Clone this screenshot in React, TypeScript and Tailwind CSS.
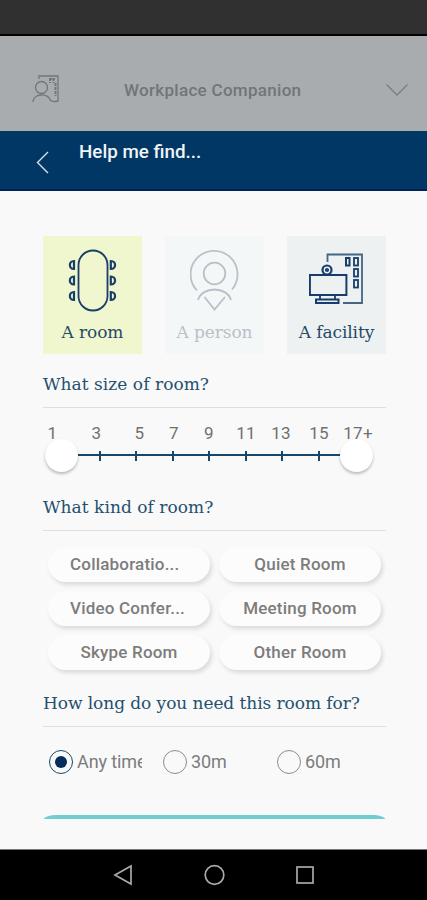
import clsx from "clsx";

const finders = [
  { id: "room", label: "A room", icon: RoomIcon, tile: "bg-[#f0f6ce] text-[#1f4a68]", width: "w-[62px]" },
  { id: "person", label: "A person", icon: PersonIcon, tile: "bg-[#f4f7f7] text-[#b9c0c9]", width: "w-[76px]" },
  { id: "facility", label: "A facility", icon: FacilityIcon, tile: "bg-[#edf1f1] text-[#1f4a68]", width: "w-[77px]" },
];

const sizes = [
  { label: "1", width: "w-[45px]" },
  { label: "3", width: "w-[43px]" },
  { label: "5", width: "w-[43px]" },
  { label: "7", width: "w-[26px]" },
  { label: "9", width: "w-[44px]" },
  { label: "11", width: "w-[30px]" },
  { label: "13", width: "w-[40px]" },
  { label: "15", width: "w-[36px]" },
  { label: "17+", width: "w-[42px]" },
];

const kinds = ["Collaboratio...", "Quiet Room", "Video Confer...", "Meeting Room", "Skype Room", "Other Room"];

const durations = ["Any time", "30m", "60m"];

function RoomIcon() {
  return (
    <svg width="50" height="64" viewBox="0 0 50 64" fill="none" stroke="#173f69" strokeWidth="1.8">
      <rect x="10.5" y="1.5" width="29" height="60" rx="14.5" />
      {[16, 31.5, 47].map((y) => (
        <g key={y} strokeWidth="2.2">
          <path d={`M6 ${y - 4}v8C0.5 ${y + 4} 0.5 ${y - 4} 6 ${y - 4}Z`} />
          <path d={`M42.8 ${y - 4}v8C48.5 ${y + 4} 48.5 ${y - 4} 42.8 ${y - 4}Z`} />
        </g>
      ))}
    </svg>
  );
}

function PersonIcon() {
  return (
    <svg width="50" height="64" viewBox="0 0 50 64" fill="none" stroke="currentColor" strokeWidth="1.8">
      <path d="M7 41.5A23.5 23.5 0 1 1 42 40.5" />
      <circle cx="24.5" cy="24.5" r="10.8" />
      <path d="M8 51C12 37 37 37 41 51" />
      <path d="M14.5 48 24.5 60.5 35 48" />
    </svg>
  );
}

function FacilityIcon() {
  return (
    <svg width="56" height="64" viewBox="0 0 56 64" fill="none" stroke="#183c6c" strokeWidth="1.8">
      <path d="M18.5 13V5.5H53V54H34" stroke="#456584" />
      <circle cx="18" cy="21" r="4.5" strokeWidth="2.2" />
      <circle cx="18" cy="21" r="1.2" />
      <rect x="0.9" y="26" width="36.5" height="20" strokeWidth="2" />
      <path d="M11 46v4.5M26 46v4.5" />
      <rect x="7" y="50.5" width="22.5" height="3.5" strokeWidth="2" />
      <rect x="37" y="9" width="3.5" height="7.5" strokeWidth="2" />
      <rect x="45" y="9" width="4" height="7.5" />
      <rect x="45" y="20" width="4" height="7.5" />
      <rect x="45" y="31" width="4" height="7.5" />
    </svg>
  );
}

function CompanionIcon() {
  return (
    <svg width="28" height="30" viewBox="0 0 28 30" fill="none" stroke="#70777a" strokeWidth="1.3">
      <circle cx="9.5" cy="12.5" r="6" />
      <path d="M1 27C1 18 17 18 18 25q2.5 2.5 8 1V1H7v3" />
      <path d="M18 3v5M21.5 3v5M17 4h6M23.5 8v13" strokeWidth="2" strokeDasharray="3 1" />
    </svg>
  );
}

function SectionTitle({ children, className }: { children: string; className?: string }) {
  return (
    <h2 className={clsx("h-[34px] shrink-0 border-b border-[#dcdfdf] whitespace-nowrap font-['DejaVu_Serif',serif] text-[17px] leading-[20px] text-[#24506f]", className)}>
      {children}
    </h2>
  );
}

function SizeSlider() {
  return (
    <div className="h-[89px] shrink-0 pt-[15px]">
      <div className="-ml-[13px] flex text-[17px] leading-5 tracking-[0.3px] text-[#707070]">
        {sizes.map((size) => (
          <span key={size.label} className={clsx("shrink-0 text-center", size.width)}>
            {size.label}
          </span>
        ))}
      </div>
      <div className="relative -mt-[4px] ml-[19px] flex h-8 w-[294px] items-center">
        <div className="h-[2px] w-full bg-[#17486a]" />
        <div className="absolute inset-0 flex items-center justify-between">
          {sizes.map((size) => (
            <i key={size.label} className="mt-0.5 h-[10px] w-[2px] bg-[#17486a]" />
          ))}
        </div>
        <div className="absolute top-0 -left-[17px] size-[33px] rounded-full bg-white shadow-[0_2px_3px_rgba(0,0,0,0.25)]" />
        <div className="absolute top-0 -right-[17px] size-[33px] rounded-full bg-white shadow-[0_2px_3px_rgba(0,0,0,0.25)]" />
      </div>
    </div>
  );
}

function Radio({ label, checked }: { label: string; checked: boolean }) {
  return (
    <div className="flex h-6 w-[93px] items-center gap-1 overflow-hidden">
      <span className={clsx("flex size-6 shrink-0 items-center justify-center rounded-full border", checked ? "border-[#17486a]" : "border-[#8d8d8d]")}>
        {checked && <span className="size-3 rounded-full bg-[#042d5c]" />}
      </span>
      <span className="text-[18px] leading-6 tracking-[-0.1px] whitespace-nowrap text-[#7c7c7c]">{label}</span>
    </div>
  );
}

export default function App() {
  return (
    <div className="flex h-[900px] w-[427px] flex-col overflow-hidden bg-[#f9f9f9] font-[Roboto,sans-serif]">
      <div className="h-[36px] shrink-0 border-b-2 border-black bg-[#303030]" />
      <header className="flex h-[95px] shrink-0 items-center bg-[#a8acae] pt-3">
        <div className="ml-[32px] w-[92px]">
          <CompanionIcon />
        </div>
        <span className="w-[262px] whitespace-nowrap text-[17px] leading-6 font-medium tracking-[0.3px] text-[#70757a]">Workplace Companion</span>
        <svg width="23" height="14" viewBox="0 0 23 14" fill="none" stroke="#787d80" strokeWidth="1.3">
          <path d="M0.5 1.5 11 12 21.5 1.5" />
        </svg>
      </header>
      <nav className="flex h-[60px] shrink-0 border-b-2 border-[#00205a] bg-[#003764]">
        <svg className="mt-5 ml-9" width="13" height="23" viewBox="0 0 13 23" fill="none" stroke="#d9e2e8" strokeWidth="1.4">
          <path d="M12 1 1.5 11.5 12 22" />
        </svg>
        <h1 className="mt-[9px] ml-[30px] text-[18.8px] leading-6 font-medium text-[#f0f4f7]">Help me find...</h1>
      </nav>

      <main className="flex w-[386px] grow flex-col pt-[45px] pl-[43px]">
        <div className="flex h-[138px] shrink-0 gap-[23px]">
          {finders.map((finder) => (
            <div key={finder.id} className={clsx("flex h-[118px] w-[99px] shrink-0 flex-col items-center pt-[13px]", finder.tile)}>
              <finder.icon />
              <span className={clsx("mt-[7px] flex justify-center whitespace-nowrap font-['DejaVu_Serif',serif] text-[17px] leading-6 tracking-[-0.1px]", finder.width)}>
                {finder.label}
              </span>
            </div>
          ))}
        </div>

        <SectionTitle className="tracking-[0.05px]">What size of room?</SectionTitle>
        <SizeSlider />

        <SectionTitle className="tracking-[0.05px]">What kind of room?</SectionTitle>
        <div className="grid h-[162px] shrink-0 grid-cols-[162px_162px] grid-rows-[35px_35px_35px] gap-x-[9px] gap-y-[9px] pt-4 pl-[5px]">
          {kinds.map((kind) => (
            <button
              key={kind}
              className={clsx(
                "rounded-full bg-[#fcfcfc] text-[17px] font-medium tracking-[0.2px] whitespace-nowrap text-[#7c7c7c] shadow-[2px_3px_4px_rgba(0,0,0,0.12)]",
                kind.endsWith("...") ? "pl-[22px] text-left" : "text-center",
              )}
            >
              {kind}
            </button>
          ))}
        </div>

        <SectionTitle className="tracking-[-0.07px]">How long do you need this room for?</SectionTitle>
        <div className="flex h-[88px] shrink-0 items-start gap-[21px] pt-[23px] pl-[6px]">
          {durations.map((label, i) => (
            <Radio key={label} label={label} checked={i === 0} />
          ))}
        </div>
        <div className="h-1 w-[343px] shrink-0 overflow-hidden">
          <div className="h-10 rounded-[12px/6px] bg-[#70cdd2]" />
        </div>
      </main>

      <footer className="flex h-[51px] shrink-0 items-center justify-center border-t border-[#777] bg-black">
        <svg width="202" height="24" viewBox="0 0 202 24" fill="none" stroke="#a9a9a9" strokeWidth="1.7">
          <path d="M2 12 18 3v18Z" />
          <circle cx="101.5" cy="12" r="9.3" />
          <rect x="184" y="4" width="16" height="16" />
        </svg>
      </footer>
    </div>
  );
}
